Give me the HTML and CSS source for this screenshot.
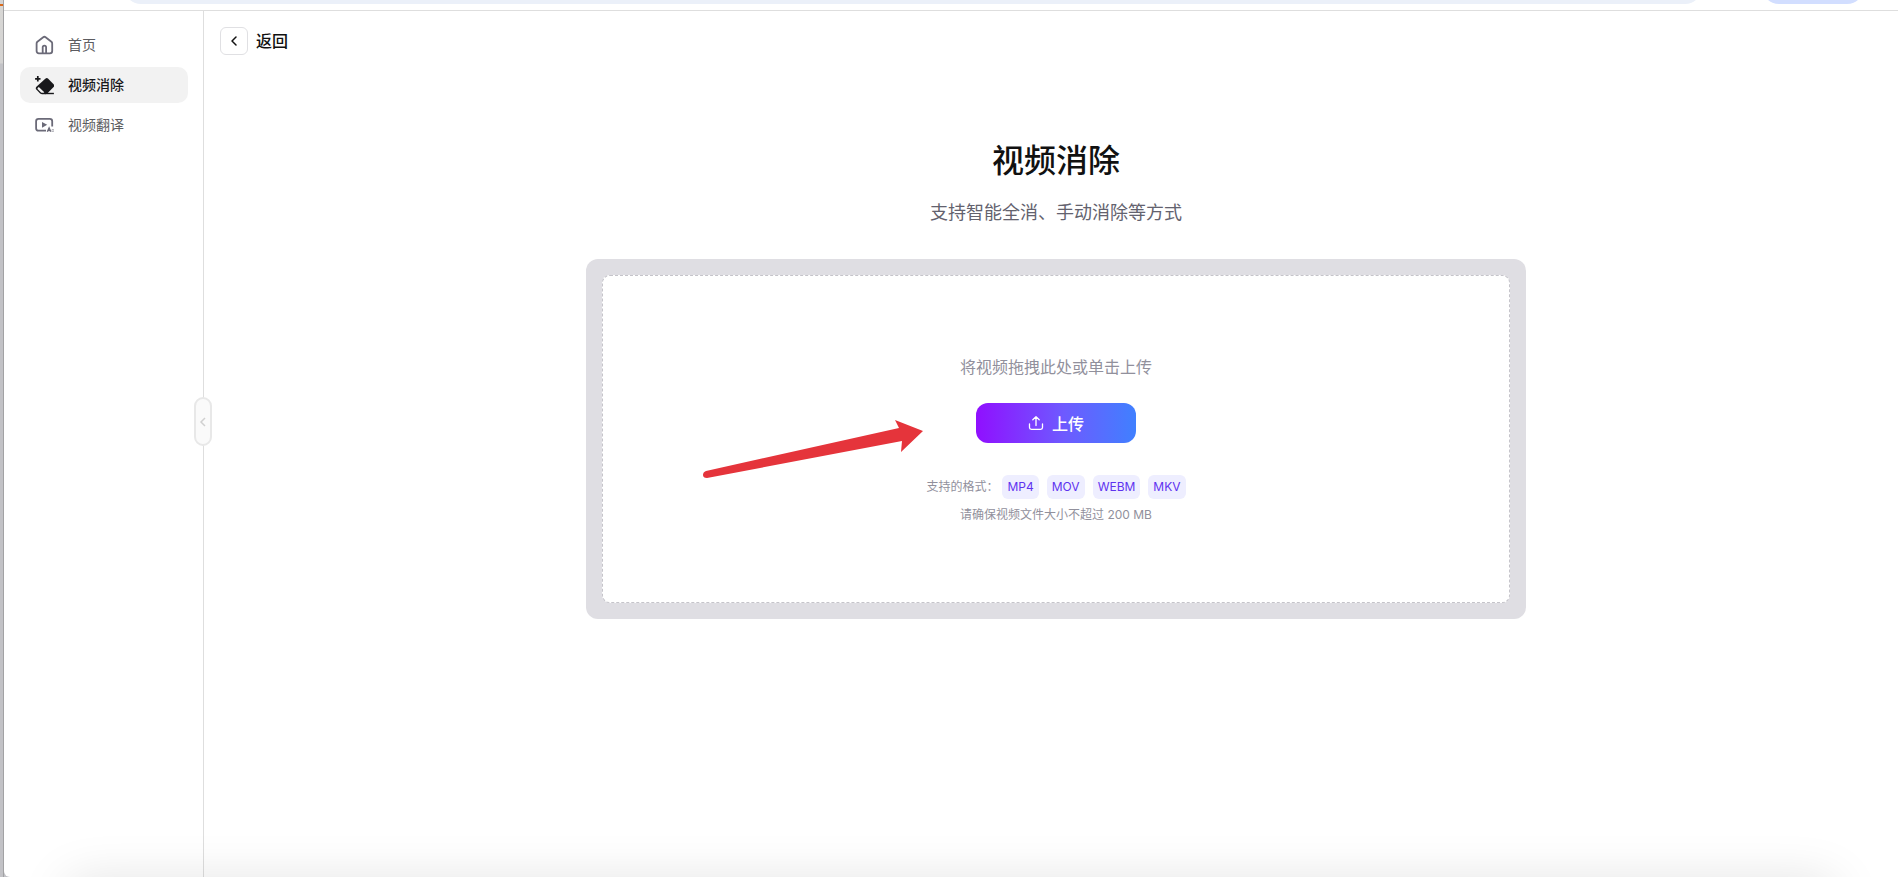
FILE: index.html
```html
<!DOCTYPE html>
<html lang="zh-CN">
<head>
<meta charset="utf-8">
<title>视频消除</title>
<link rel="stylesheet" href="styles.css">
</head>
<body>
<div class="desktop">
  <div class="desktop-edge"></div>
  <div class="window">
    <div class="toolbar">
      <div class="address-bar"></div>
      <div class="toolbar-chip"></div>
    </div>
    <div class="app">
      <aside class="sidebar">
        <nav class="nav">
          <a class="nav-item" href="#home">
            <svg class="nav-icon" viewBox="0 0 20 20" fill="none" stroke="currentColor" stroke-width="1.8" stroke-linejoin="round"><path d="M2.6 8.4Q2.600 7.400 3.400 6.700L9.200 2.200Q10.400 1.300 11.600 2.200L17.400 6.700Q18.200 7.400 18.200 8.400V16Q18.200 18.300 15.900 18.300H4.900Q2.600 18.300 2.600 16Z"/><path d="M8.700 18V12.300Q8.700 10.700 10.400 10.700T12.100 12.300V18"/></svg>
            <span>首页</span>
          </a>
          <a class="nav-item nav-item-active" href="#erase">
            <svg class="nav-icon" viewBox="0 0 20 20"><path d="M3.800 1.100V6.500M1.100 3.800H6.500" stroke="currentColor" stroke-width="1.700"/><path d="M11.300 3.700Q12.800 2.400 14.200 3.700L19.600 9.300Q20.700 10.700 19.600 12.100L13.300 18.400Q12.300 19.200 11 19.200H8.200Q6.900 19.200 5.900 18.300L2.300 14.600Q1.200 13.200 2.400 11.800Z" fill="currentColor"/><path d="M3.700 12.900L4.800 11.900L10.300 17.300L9.700 17.800H8.300Q7.400 17.800 6.800 17.200L3.800 14.200Q3.200 13.500 3.700 12.900Z" fill="#f2f2f2"/><path d="M11 18.500H19.900" stroke="currentColor" stroke-width="1.400"/></svg>
            <span>视频消除</span>
          </a>
          <a class="nav-item" href="#translate">
            <svg class="nav-icon" viewBox="0 0 20 20"><path d="M12 15.600H4.500Q2.100 15.600 2.100 13.200V6.200Q2.100 3.800 4.500 3.800H15.800Q18.200 3.800 18.200 6.200V11.500" fill="none" stroke="currentColor" stroke-width="1.800"/><path d="M8 6.900L13.200 9.800L8 12.700Z" fill="currentColor"/><path d="M13.300 16.800L15.100 12.800L16.900 16.800M14.200 15.500H16.200" fill="none" stroke="currentColor" stroke-width="1.300"/><path d="M18 14.500H19.800V16.500H18Z" fill="none" stroke="currentColor" stroke-width=".7" opacity=".6"/></svg>
            <span>视频翻译</span>
          </a>
        </nav>
        <button class="collapse" type="button" aria-label="收起侧栏">
          <svg viewBox="0 0 8 10" width="8" height="10"><path d="M6 1L2 5L6 9" fill="none" stroke="#d0d0d0" stroke-width="1.500"/></svg>
        </button>
      </aside>
      <main class="main">
        <header class="page-head">
          <button class="back" type="button" id="back" aria-labelledby="back-label">
            <svg viewBox="0 0 14 14" width="14" height="14"><path d="M9 3L5 7L9 11" fill="none" stroke="#111" stroke-width="1.500" stroke-linecap="round" stroke-linejoin="round"/></svg>
          </button>
          <label class="back-label" id="back-label" for="back">返回</label>
        </header>
        <section class="content">
          <h1 class="title">视频消除</h1>
          <p class="subtitle">支持智能全消、手动消除等方式</p>
          <div class="card">
            <div class="dropzone">
              <p class="prompt">将视频拖拽此处或单击上传</p>
              <button class="upload" type="button">
                <svg viewBox="0 0 16 16" width="16" height="16" fill="none" stroke="currentColor" stroke-width="1.300" stroke-linecap="round" stroke-linejoin="round"><path d="M8 10.500V1.800M4.800 4.800L8 1.600L11.200 4.800"/><path d="M1.500 9V12.500Q1.500 14.300 3.300 14.300H12.700Q14.500 14.300 14.500 12.500V9"/></svg>
                <span>上传</span>
              </button>
              <div class="formats">
                <span>支持的格式：</span>
                <ul class="tags">
                  <li class="tag">MP4</li>
                  <li class="tag">MOV</li>
                  <li class="tag">WEBM</li>
                  <li class="tag">MKV</li>
                </ul>
              </div>
              <p class="limit">请确保视频文件大小不超过 200 MB</p>
            </div>
            <svg class="arrow" viewBox="0 0 222 60" width="222" height="60"><path d="M4 51L197 8L193 0L221 11L199 32L200 21L5 58Q1 58 1 55Q1 52 4 51Z" fill="#e5343b"/></svg>
          </div>
        </section>
      </main>
    </div>
    <div class="bottom-shade"></div>
  </div>
</div>
</body>
</html>
```
FILE: styles.css
```css
* {
  box-sizing: border-box;
}

body {
  margin: 0;
  font-family: Inter, "Noto Sans CJK SC", sans-serif;
  color: #111;
}

h1, p, ul {
  margin: 0;
  padding: 0;
}

button {
  padding: 0;
  font: inherit;
  cursor: pointer;
}

.desktop {
  display: flex;
  min-height: 100vh;
  background: #c2c2c6;
}

.desktop-edge {
  width: 4px;
  border-right: 1px solid #a2a2a4;
  background: linear-gradient(#d4d4d4 4px, #d96a1c 4px, #d96a1c 6px, #d8d7d5 6px, #d4d3d2 63px, #c2c2c6 64px);
}

.window {
  position: relative;
  display: flex;
  flex: 1;
  flex-direction: column;
  overflow: hidden;
  border-bottom-left-radius: 6px;
  background: #fff;
}

.toolbar {
  display: flex;
  gap: 60px;
  height: 11px;
  padding: 0 34px 0 120px;
  border-bottom: 1px solid #dedede;
}

.address-bar,
.toolbar-chip {
  height: 34px;
  margin-top: -30px;
  border-radius: 17px;
}

.address-bar {
  flex: 1;
  background: #ebf0f9;
}

.toolbar-chip {
  width: 102px;
  background: #d2deff;
}

.app {
  display: flex;
  flex: 1;
}

.sidebar {
  position: relative;
  width: 200px;
  padding: 16px 15px 16px 16px;
  border-right: 1px solid #dedede;
}

.nav {
  display: flex;
  flex-direction: column;
  gap: 4px;
}

.nav-item {
  display: flex;
  align-items: center;
  gap: 14px;
  height: 36px;
  padding: 0 14px;
  border-radius: 10px;
  font-size: 14px;
  line-height: 20px;
  color: #5c5c60;
  text-decoration: none;
}

.nav-item-active {
  background: #f2f2f2;
  color: #18181b;
  font-weight: 500;
}

.nav-icon {
  width: 20px;
  height: 20px;
  color: #6b6a78;
}

.nav-item-active .nav-icon {
  color: #18181b;
}

.collapse {
  position: absolute;
  top: 386px;
  right: -9px;
  display: flex;
  align-items: center;
  justify-content: center;
  width: 18px;
  height: 49px;
  border: 2px solid #e8e8e8;
  border-radius: 9px;
  background: #fafafa;
}

.collapse svg {
  flex: none;
}

.main {
  flex: 1;
  padding: 16px 6px 16px 16px;
}

.page-head {
  display: flex;
  align-items: center;
  gap: 8px;
}

.back {
  display: flex;
  align-items: center;
  justify-content: center;
  width: 28px;
  height: 28px;
  border: 1px solid #e0e0e3;
  border-radius: 6px;
  background: #fff;
}

.back-label {
  font-size: 16px;
  font-weight: 500;
  line-height: 24px;
}

.content {
  display: flex;
  flex-direction: column;
  align-items: center;
  padding-top: 82px;
}

.title {
  font-size: 32px;
  font-weight: 500;
  line-height: 48px;
}

.subtitle {
  margin-top: 14px;
  font-size: 18px;
  line-height: 28px;
  color: #63626e;
}

.card {
  position: relative;
  width: 100%;
  max-width: 940px;
  margin-top: 32px;
  padding: 16px;
  border-radius: 12px;
  background: #dfdee3;
}

.dropzone {
  display: flex;
  flex-direction: column;
  align-items: center;
  justify-content: center;
  min-height: 328px;
  border: 1px dashed #c5c4ca;
  border-radius: 8px;
  background: #fff;
}

.prompt {
  font-size: 16px;
  line-height: 24px;
  color: #91909c;
}

.upload {
  display: flex;
  align-items: center;
  justify-content: center;
  gap: 8px;
  width: 160px;
  height: 40px;
  margin: 24px 0 32px;
  border: 0;
  border-radius: 12px;
  background: linear-gradient(90deg, #900fff, #6e5aff 55%, #4080ff);
  color: #fff;
  font-size: 16px;
  font-weight: 500;
}

.formats {
  display: flex;
  align-items: center;
  gap: 4px;
  font-size: 12px;
  line-height: 16px;
  color: #91909c;
}

.tags {
  display: flex;
  gap: 8px;
  list-style: none;
}

.tag {
  padding: 4px 5px;
  border-radius: 6px;
  background: #eeeeff;
  color: #5f33ef;
}

.limit {
  margin-top: 8px;
  font-size: 12px;
  line-height: 16px;
  color: #91909c;
}

.arrow {
  position: absolute;
  top: 161px;
  left: 116px;
  pointer-events: none;
}

.bottom-shade {
  position: absolute;
  right: 60px;
  bottom: -40px;
  left: 60px;
  height: 40px;
  border-radius: 20px;
  box-shadow: 0 4px 50px rgba(0, 0, 0, 0.13);
  pointer-events: none;
}
```
